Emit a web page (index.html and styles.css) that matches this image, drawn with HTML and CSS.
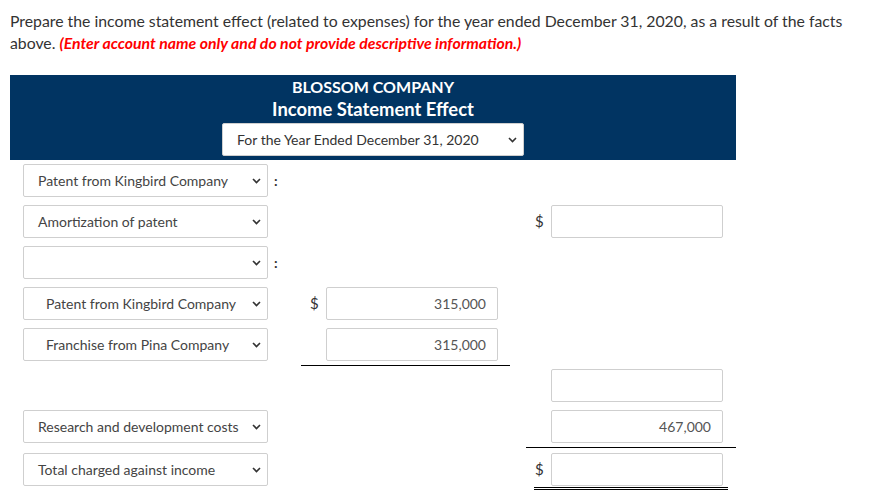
FILE: index.html
```html
<!DOCTYPE html>
<html>
<head>
<meta charset="utf-8">
<link rel="stylesheet" href="styles.css">
</head>
<body>
<p class="prompt"><span>Prepare the income statement effect (related to expenses) for the year ended December 31, 2020, as a result of the facts</span><br><span>above.</span> <em class="note">(Enter account name only and do not provide descriptive information.)</em></p>

<div class="sheet">
  <div class="head">
    <div class="co">BLOSSOM COMPANY</div>
    <div class="title">Income Statement Effect</div>
    <div class="drop head-drop"><span>For the Year Ended December 31, 2020</span><svg class="chev" width="9" height="6" viewBox="0 0 9 6"><path d="M1 1 L4.5 4.5 L8 1" fill="none" stroke="#333" stroke-width="1.6"/></svg></div>
  </div>

  <div class="row first">
    <div class="label"><div class="drop"><span>Patent from Kingbird Company</span><svg class="chev" width="9" height="6" viewBox="0 0 9 6"><path d="M1 1 L4.5 4.5 L8 1" fill="none" stroke="#333" stroke-width="1.6"/></svg></div><span class="colon">:</span></div>
    <div></div>
    <div></div>
  </div>

  <div class="row">
    <div class="label"><div class="drop"><span>Amortization of patent</span><svg class="chev" width="9" height="6" viewBox="0 0 9 6"><path d="M1 1 L4.5 4.5 L8 1" fill="none" stroke="#333" stroke-width="1.6"/></svg></div></div>
    <div></div>
    <div class="amt"><span class="dollar">$</span><div class="box"></div></div>
  </div>

  <div class="row">
    <div class="label"><div class="drop"><span></span><svg class="chev" width="9" height="6" viewBox="0 0 9 6"><path d="M1 1 L4.5 4.5 L8 1" fill="none" stroke="#333" stroke-width="1.6"/></svg></div><span class="colon">:</span></div>
    <div></div>
    <div></div>
  </div>

  <div class="row">
    <div class="label"><div class="drop indent"><span>Patent from Kingbird Company</span><svg class="chev" width="9" height="6" viewBox="0 0 9 6"><path d="M1 1 L4.5 4.5 L8 1" fill="none" stroke="#333" stroke-width="1.6"/></svg></div></div>
    <div class="amt"><span class="dollar">$</span><div class="box">315,000</div></div>
    <div></div>
  </div>

  <div class="row">
    <div class="label"><div class="drop indent"><span>Franchise from Pina Company</span><svg class="chev" width="9" height="6" viewBox="0 0 9 6"><path d="M1 1 L4.5 4.5 L8 1" fill="none" stroke="#333" stroke-width="1.6"/></svg></div></div>
    <div class="amt rule"><span class="dollar blank">$</span><div class="box">315,000</div></div>
    <div></div>
  </div>

  <div class="row">
    <div class="label"></div>
    <div></div>
    <div class="amt"><span class="dollar blank">$</span><div class="box"></div></div>
  </div>

  <div class="row tall">
    <div class="label"><div class="drop"><span>Research and development costs</span><svg class="chev" width="9" height="6" viewBox="0 0 9 6"><path d="M1 1 L4.5 4.5 L8 1" fill="none" stroke="#333" stroke-width="1.6"/></svg></div></div>
    <div></div>
    <div class="amt rule"><span class="dollar blank">$</span><div class="box">467,000</div></div>
  </div>

  <div class="row">
    <div class="label"><div class="drop"><span>Total charged against income</span><svg class="chev" width="9" height="6" viewBox="0 0 9 6"><path d="M1 1 L4.5 4.5 L8 1" fill="none" stroke="#333" stroke-width="1.6"/></svg></div></div>
    <div></div>
    <div class="amt total"><span class="dollar">$</span><div class="box"></div></div>
  </div>
</div>
</body>
</html>
```

FILE: styles.css
```css
* { box-sizing: border-box; }
html, body { margin: 0; background: #fff; }
body {
  padding: 10px;
  font-family: Lato, "Open Sans", sans-serif;
  color: #333;
}
.prompt {
  margin: 0;
  width: 870px;
  font-size: 15.8px;
  line-height: 21.5px;
  color: #333;
}
.note {
  color: #ff0000;
  font-weight: 700;
  font-style: italic;
}
.sheet {
  margin-top: 22px;
  width: 726px;
}
.head {
  background: #013462;
  color: #fff;
  display: flex;
  flex-direction: column;
  align-items: center;
  padding: 0 0 4px;
}
.co {
  font-size: 16px;
  font-weight: 700;
  line-height: 23px;
}
.title {
  font-size: 18.4px;
  font-weight: 700;
  line-height: 22px;
}
.drop {
  display: flex;
  align-items: center;
  justify-content: space-between;
  height: 33px;
  background: #fff;
  border: 1px solid #cfcfcf;
  border-radius: 2px;
  font-size: 14px;
  color: #444;
  padding: 0 6px 0 14px;
}
.head-drop {
  width: 302px;
  margin-top: 3px;
  color: #333;
}
.drop.indent { padding-left: 22px; }
.chev { flex: none; }
.row {
  display: grid;
  grid-template-columns: 275px 209px 210px;
  grid-template-rows: 33px;
  align-items: start;
  column-gap: 16px;
  height: 33px;
  margin-bottom: 8px;
}
.row.first { margin-top: 4px; }
.row.tall { margin-bottom: 10px; }
.label {
  display: flex;
  align-items: center;
  height: 33px;
  padding-left: 13px;
}
.label .drop { width: 245px; flex: none; }
.colon {
  margin-left: 6px;
  font-size: 14px;
  font-weight: 700;
  color: #333;
}
.amt {
  display: flex;
  align-items: flex-start;
  padding-left: 9px;
}
.dollar {
  width: 8px;
  margin-right: 8px;
  font-size: 15px;
  line-height: 33px;
  color: #333;
}
.dollar.blank { visibility: hidden; }
.box {
  width: 172px;
  height: 33px;
  border: 1px solid #cfcfcf;
  border-radius: 2px;
  background: #fff;
  text-align: right;
  padding-right: 11px;
  font-size: 14px;
  line-height: 31px;
  color: #555;
}
.amt.rule {
  height: 38px;
  border-bottom: 1px solid #000;
}
.amt.total {
  height: 37px;
  margin: 0 8px;
  padding-left: 1px;
  border-bottom: 3px double #000;
}
```
